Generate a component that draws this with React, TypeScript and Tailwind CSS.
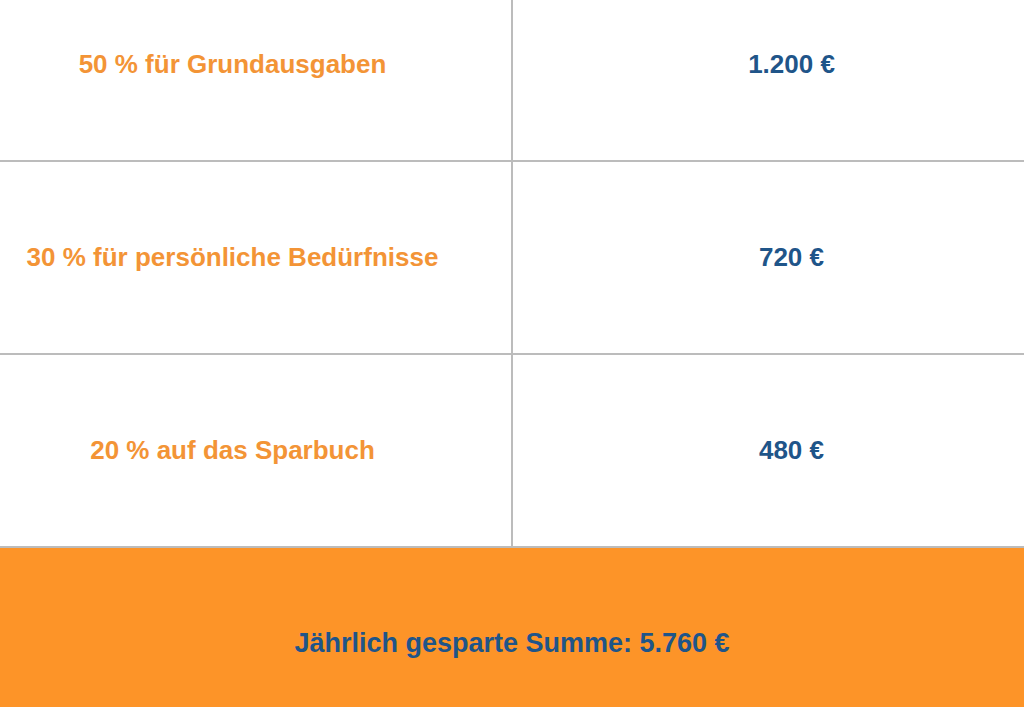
const rows = [
  { label: "50 % für Grundausgaben", value: "1.200 €" },
  { label: "30 % für persönliche Bedürfnisse", value: "720 €" },
  { label: "20 % auf das Sparbuch", value: "480 €" },
];

export default function App() {
  return (
    <div className="h-[707px] overflow-hidden bg-white font-['Liberation_Sans',Arial,sans-serif] font-bold text-[26px]">
      <div className="-mt-[31px]">
        {rows.map((row) => (
          <div
            key={row.label}
            className="grid grid-cols-[511px_2px_511px] border-b-2 border-[#bcbcbc]"
          >
            <div className="h-[191px] flex items-center justify-center pr-[46px] text-[#f39436]">
              {row.label}
            </div>
            <div className="bg-[#bcbcbc]" />
            <div className="h-[191px] flex items-center justify-center pl-[46px] text-[#1f5589]">
              {row.value}
            </div>
          </div>
        ))}
        <div className="h-[191px] flex items-center justify-center bg-[#fd9428] text-[#1f5589] text-[27px]">
          Jährlich gesparte Summe: 5.760 €
        </div>
      </div>
    </div>
  );
}
